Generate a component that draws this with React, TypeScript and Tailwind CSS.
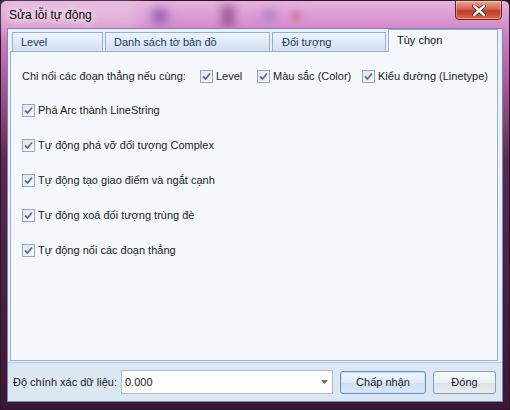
import type { ReactNode } from "react";

function CheckBox({ label }: { label?: ReactNode }) {
  return (
    <label className="flex items-center gap-[3px]">
      <span className="flex h-[13px] w-[13px] items-center justify-center border border-[#98a8bf] bg-[linear-gradient(135deg,#dfe6ef,#f6f8fb)]">
        <svg width="9" height="9" viewBox="0 0 9 9">
          <path d="M1 4.5 L3.5 7 L8 1.5" fill="none" stroke="#5b7194" strokeWidth="1.8" />
        </svg>
      </span>
      {label && <span>{label}</span>}
    </label>
  );
}

const options = [
  "Phá Arc thành LineString",
  "Tự động phá vỡ đối tượng Complex",
  "Tự động tạo giao điểm và ngắt cạnh",
  "Tự động xoá đối tượng trùng đè",
  "Tự động nối các đoạn thẳng",
];

export default function App() {
  return (
    <div className="h-[410px] w-[510px] overflow-hidden bg-[#2a1426] font-['Liberation_Sans',Arial,sans-serif] text-[11px] text-[#1c1c1c]">
      <div className="relative flex h-full flex-col rounded-t-[6px] border border-[#2b1628] bg-[linear-gradient(180deg,#e6b2de_0px,#d48ccb_26px,#b86aae_60px,#5a2852_160px,#3b1736_100%)] px-[6px] pb-[7px]">
        {/* blurred background blobs behind the glass */}
        <div className="absolute left-[150px] top-[6px] h-[18px] w-[18px] rounded-full bg-[#7a4aa8] opacity-60 blur-[4px]" />
        <div className="absolute left-[220px] top-[4px] h-[22px] w-[14px] bg-[#7c3c72] opacity-60 blur-[4px]" />
        <div className="absolute left-[260px] top-[8px] h-[12px] w-[16px] rounded-full bg-[#8f64c2] opacity-50 blur-[4px]" />
        <div className="absolute left-[290px] top-[10px] h-[10px] w-[10px] rounded-full bg-[#d0486f] opacity-50 blur-[3px]" />
        <div className="absolute left-[0px] top-[0px] h-[30px] w-[140px] bg-[#f1dcec] opacity-40 blur-[8px]" />

        <div className="relative flex h-[27px] items-start">
          <span className="pl-[2px] pt-[7px] text-[12px] leading-[14px] text-black [text-shadow:0_0_6px_#fff,0_0_10px_#fff]">
            Sửa lỗi tự động
          </span>
          <button
            type="button"
            className="absolute right-[1px] top-[-1px] flex h-[20px] w-[47px] items-center justify-center rounded-b-[4px] border border-[#5e2a24] bg-[linear-gradient(180deg,#eaa79a_0%,#d6634e_45%,#bf3b25_55%,#d86a4c_100%)] shadow-[inset_0_0_0_1px_rgba(255,255,255,0.35)]"
          >
            <svg width="14" height="11" viewBox="0 0 14 11">
              <path d="M2 1 L12 10 M12 1 L2 10" stroke="#3c1a16" strokeWidth="4" strokeLinecap="round" />
              <path d="M2 1 L12 10 M12 1 L2 10" stroke="#fff" strokeWidth="2.4" strokeLinecap="round" />
            </svg>
          </button>
        </div>

        <div className="relative flex flex-1 flex-col border border-[#7a8aa2] bg-[#e9f0f9]">
          <div className="flex flex-1 flex-col pl-[2px] pr-[4px] pt-[3px]">
            <div className="relative z-10 flex h-[19px] items-end pl-[2px] text-[#1e395b]">
              <div className="mr-[2px] flex h-[19px] w-[91px] items-center border border-b-0 border-[#98b0d0] bg-[linear-gradient(180deg,#eef3fb,#d3e0f2)] pl-[8px]">
                Level
              </div>
              <div className="mr-[2px] flex h-[19px] w-[165px] items-center border border-b-0 border-[#98b0d0] bg-[linear-gradient(180deg,#eef3fb,#d3e0f2)] pl-[8px]">
                Danh sách tờ bản đồ
              </div>
              <div className="mr-[2px] flex h-[19px] w-[114px] items-center border border-b-0 border-[#98b0d0] bg-[linear-gradient(180deg,#eef3fb,#d3e0f2)] pl-[9px]">
                Đối tượng
              </div>
              <div className="mb-[-1px] flex h-[23px] w-[110px] items-center self-end border border-b-0 border-[#98b0d0] bg-[#f4f8fd] pb-[2px] pl-[8px] text-[#111]">
                Tùy chọn
              </div>
            </div>
            <div className="flex flex-1 flex-col border border-[#98b0d0] bg-[#f4f8fd] pl-[11px] pt-[16px]">
              <div className="flex h-[16px] items-center">
                <span className="w-[178px]">Chi nối các đoạn thẳng nếu cùng:</span>
                <div className="w-[57px]">
                  <CheckBox label="Level" />
                </div>
                <div className="w-[105px]">
                  <CheckBox label="Màu sắc (Color)" />
                </div>
                <CheckBox label="Kiểu đường (Linetype)" />
              </div>
              <div className="mt-[18px] flex flex-col gap-[19px]">
                {options.map((text) => (
                  <div key={text} className="flex h-[16px] items-center">
                    <CheckBox label={text} />
                  </div>
                ))}
              </div>
            </div>
          </div>

          <div className="mt-[1px] flex h-[39px] items-center border-t border-[#b8c9df] bg-[#dce7f4] pl-[5px] pr-[6px]">
            <span className="w-[108px]">Độ chính xác dữ liệu:</span>
            <div className="flex h-[24px] w-[212px] items-center justify-between border border-[#abbad0] bg-white pl-[3px] pr-[4px]">
              <span>0.000</span>
              <svg width="7" height="4" viewBox="0 0 7 4">
                <path d="M0 0 L7 0 L3.5 4 Z" fill="#5a6b84" />
              </svg>
            </div>
            <button
              type="button"
              className="ml-[7px] flex h-[23px] w-[86px] items-center justify-center rounded-[3px] border border-[#6d8fbd] bg-[linear-gradient(180deg,#f2f7fd_0%,#dfeaf8_50%,#cfdff3_51%,#dce8f7_100%)] shadow-[inset_0_0_0_1px_#c8e0fa]"
            >
              Chấp nhận
            </button>
            <button
              type="button"
              className="ml-[7px] flex h-[23px] w-[63px] items-center justify-center rounded-[3px] border border-[#8a9bb3] bg-[linear-gradient(180deg,#f7f9fc_0%,#ebeff4_50%,#dde3ea_51%,#e9edf2_100%)]"
            >
              Đóng
            </button>
          </div>
        </div>
      </div>
    </div>
  );
}
